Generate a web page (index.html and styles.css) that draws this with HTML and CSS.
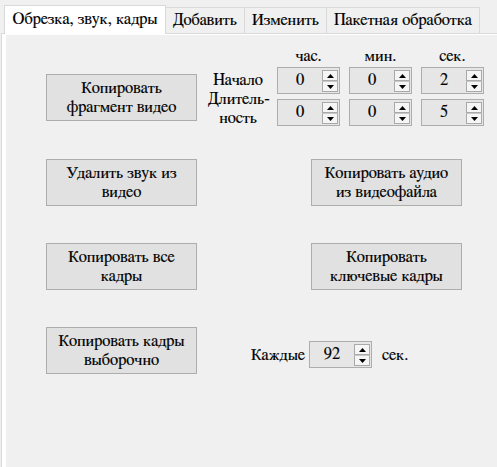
FILE: index.html
```html
<!DOCTYPE html>
<html lang="ru">
<head>
<meta charset="utf-8">
<title>Обрезка, звук, кадры</title>
<link rel="stylesheet" href="styles.css">
</head>
<body>
<div class="tabctl">
  <div class="tabs">
    <div class="tab active w1">Обрезка, звук, кадры</div>
    <div class="tab w2">Добавить</div>
    <div class="tab w3">Изменить</div>
    <div class="tab w4">Пакетная обработка</div>
  </div>
  <div class="panel">
    <div class="page">
      <div class="row row-a">
        <button class="btn btn-a">Копировать<br>фрагмент видео</button>
        <div class="timegrid">
          <div class="hdr c2">час.</div>
          <div class="hdr c3">мин.</div>
          <div class="hdr c4">сек.</div>
          <div class="lbl r2">Начало</div>
          <div class="spin r2 c2"><span class="val">0</span><span class="arrows"><span class="arr"><svg width="7" height="4" viewBox="0 0 7 4"><path d="M0 4 L3.5 0 L7 4 Z" fill="#000"/></svg></span><span class="arr"><svg width="7" height="4" viewBox="0 0 7 4"><path d="M0 0 L7 0 L3.5 4 Z" fill="#000"/></svg></span></span></div>
          <div class="spin r2 c3"><span class="val">0</span><span class="arrows"><span class="arr"><svg width="7" height="4" viewBox="0 0 7 4"><path d="M0 4 L3.5 0 L7 4 Z" fill="#000"/></svg></span><span class="arr"><svg width="7" height="4" viewBox="0 0 7 4"><path d="M0 0 L7 0 L3.5 4 Z" fill="#000"/></svg></span></span></div>
          <div class="spin r2 c4"><span class="val">2</span><span class="arrows"><span class="arr"><svg width="7" height="4" viewBox="0 0 7 4"><path d="M0 4 L3.5 0 L7 4 Z" fill="#000"/></svg></span><span class="arr"><svg width="7" height="4" viewBox="0 0 7 4"><path d="M0 0 L7 0 L3.5 4 Z" fill="#000"/></svg></span></span></div>
          <div class="lbl lbl2 r3">Длитель-<br>ность</div>
          <div class="spin r3 c2"><span class="val">0</span><span class="arrows"><span class="arr"><svg width="7" height="4" viewBox="0 0 7 4"><path d="M0 4 L3.5 0 L7 4 Z" fill="#000"/></svg></span><span class="arr"><svg width="7" height="4" viewBox="0 0 7 4"><path d="M0 0 L7 0 L3.5 4 Z" fill="#000"/></svg></span></span></div>
          <div class="spin r3 c3"><span class="val">0</span><span class="arrows"><span class="arr"><svg width="7" height="4" viewBox="0 0 7 4"><path d="M0 4 L3.5 0 L7 4 Z" fill="#000"/></svg></span><span class="arr"><svg width="7" height="4" viewBox="0 0 7 4"><path d="M0 0 L7 0 L3.5 4 Z" fill="#000"/></svg></span></span></div>
          <div class="spin r3 c4"><span class="val">5</span><span class="arrows"><span class="arr"><svg width="7" height="4" viewBox="0 0 7 4"><path d="M0 4 L3.5 0 L7 4 Z" fill="#000"/></svg></span><span class="arr"><svg width="7" height="4" viewBox="0 0 7 4"><path d="M0 0 L7 0 L3.5 4 Z" fill="#000"/></svg></span></span></div>
        </div>
      </div>
      <div class="row row-b">
        <button class="btn">Удалить звук из<br>видео</button>
        <button class="btn">Копировать аудио<br>из видеофайла</button>
      </div>
      <div class="row row-c">
        <button class="btn">Копировать все<br>кадры</button>
        <button class="btn">Копировать<br>ключевые кадры</button>
      </div>
      <div class="row row-d">
        <button class="btn">Копировать кадры<br>выборочно</button>
        <div class="every">
          <span class="every-lbl">Каждые</span>
          <div class="spin"><span class="val">92</span><span class="arrows"><span class="arr"><svg width="7" height="4" viewBox="0 0 7 4"><path d="M0 4 L3.5 0 L7 4 Z" fill="#000"/></svg></span><span class="arr"><svg width="7" height="4" viewBox="0 0 7 4"><path d="M0 0 L7 0 L3.5 4 Z" fill="#000"/></svg></span></span></div>
          <span class="every-unit">сек.</span>
        </div>
      </div>
    </div>
  </div>
</div>
</body>
</html>
```
FILE: styles.css
```css
html, body {
  margin: 0;
  padding: 0;
}
body {
  width: 497px;
  height: 467px;
  overflow: hidden;
  background: #f0f0f0;
  font-family: "FreeSerif", serif;
  font-size: 16.5px;
  color: #000;
  -webkit-text-stroke: 0.15px #000;
}
.tabctl {
  margin-left: 1px;
  width: 520px;
}
.tabs {
  display: flex;
  align-items: flex-end;
  height: 33px;
  padding-left: 3px;
}
.tab {
  box-sizing: border-box;
  height: 26px;
  border: 1px solid #d9d9d9;
  border-bottom: none;
  background: #f0f0f0;
  text-align: center;
  line-height: 25px;
  white-space: nowrap;
  margin-left: -1px;
}
.tab.active {
  position: relative;
  z-index: 1;
  height: 29px;
  margin-bottom: -1px;
  margin-left: 0;
  background: #fff;
  line-height: 27px;
}
.w1 { width: 162px; }
.w2 { width: 80px; }
.w3 { width: 83px; }
.w4 { width: 154px; }
.panel {
  border: 1px solid #d9d9d9;
  border-bottom: none;
  background: #fff;
  padding: 1px 0 0 4px;
}
.page {
  background: #f0f0f0;
  height: 432px;
  padding: 12px 0 0 40px;
  box-sizing: border-box;
}
.row {
  display: flex;
}
.btn {
  box-sizing: border-box;
  width: 151px;
  height: 47px;
  border: 1px solid #adadad;
  background: #e1e1e1;
  font-family: "FreeSerif", serif;
  font-size: 16.5px;
  line-height: 19px;
  color: #000;
  -webkit-text-stroke: 0.15px #000;
  padding: 0;
  margin: 0;
  text-align: center;
}
.btn-a {
  margin-top: 27px;
}
.timegrid {
  display: grid;
  grid-template-columns: 60px 63px 63px 63px;
  grid-template-rows: 20px 32px 27px;
  column-gap: 9px;
  margin-left: 11px;
}
.c2 { grid-column: 2; }
.c3 { grid-column: 3; }
.c4 { grid-column: 4; }
.r2 { grid-row: 2; }
.r3 { grid-row: 3; }
.hdr {
  grid-row: 1;
  text-align: center;
  align-self: end;
  line-height: 17px;
  padding-bottom: 2px;
}
.lbl {
  grid-column: 1;
  text-align: center;
  line-height: 19px;
  align-self: start;
  margin-top: 4px;
}
.lbl2 {
  align-self: center;
  margin-bottom: 8px;
  margin-top: 0;
}
.spin {
  box-sizing: border-box;
  width: 63px;
  height: 27px;
  border: 1px solid #adadad;
  background: #e6e6e6;
  display: flex;
  align-self: start;
}
.val {
  flex: 1;
  text-align: center;
  line-height: 25px;
}
.arrows {
  display: flex;
  flex-direction: column;
  width: 16px;
  padding: 2px 1px 1px 0;
}
.arr {
  flex: 1;
  border: 1px solid #a9a9a9;
  background: #f5f5f5;
  display: flex;
  align-items: center;
  justify-content: center;
}
.arr + .arr {
  border-top-color: #c8c8c8;
}
.row-b {
  margin-top: 33px;
  gap: 114px;
}
.row-c {
  margin-top: 37px;
  gap: 114px;
}
.row-d {
  margin-top: 37px;
}
.every {
  display: flex;
  align-items: center;
  align-self: center;
  margin-top: 8px;
  margin-left: 54px;
}
.every-lbl {
  margin-right: 4px;
}
.every-unit {
  margin-left: 10px;
}
```
